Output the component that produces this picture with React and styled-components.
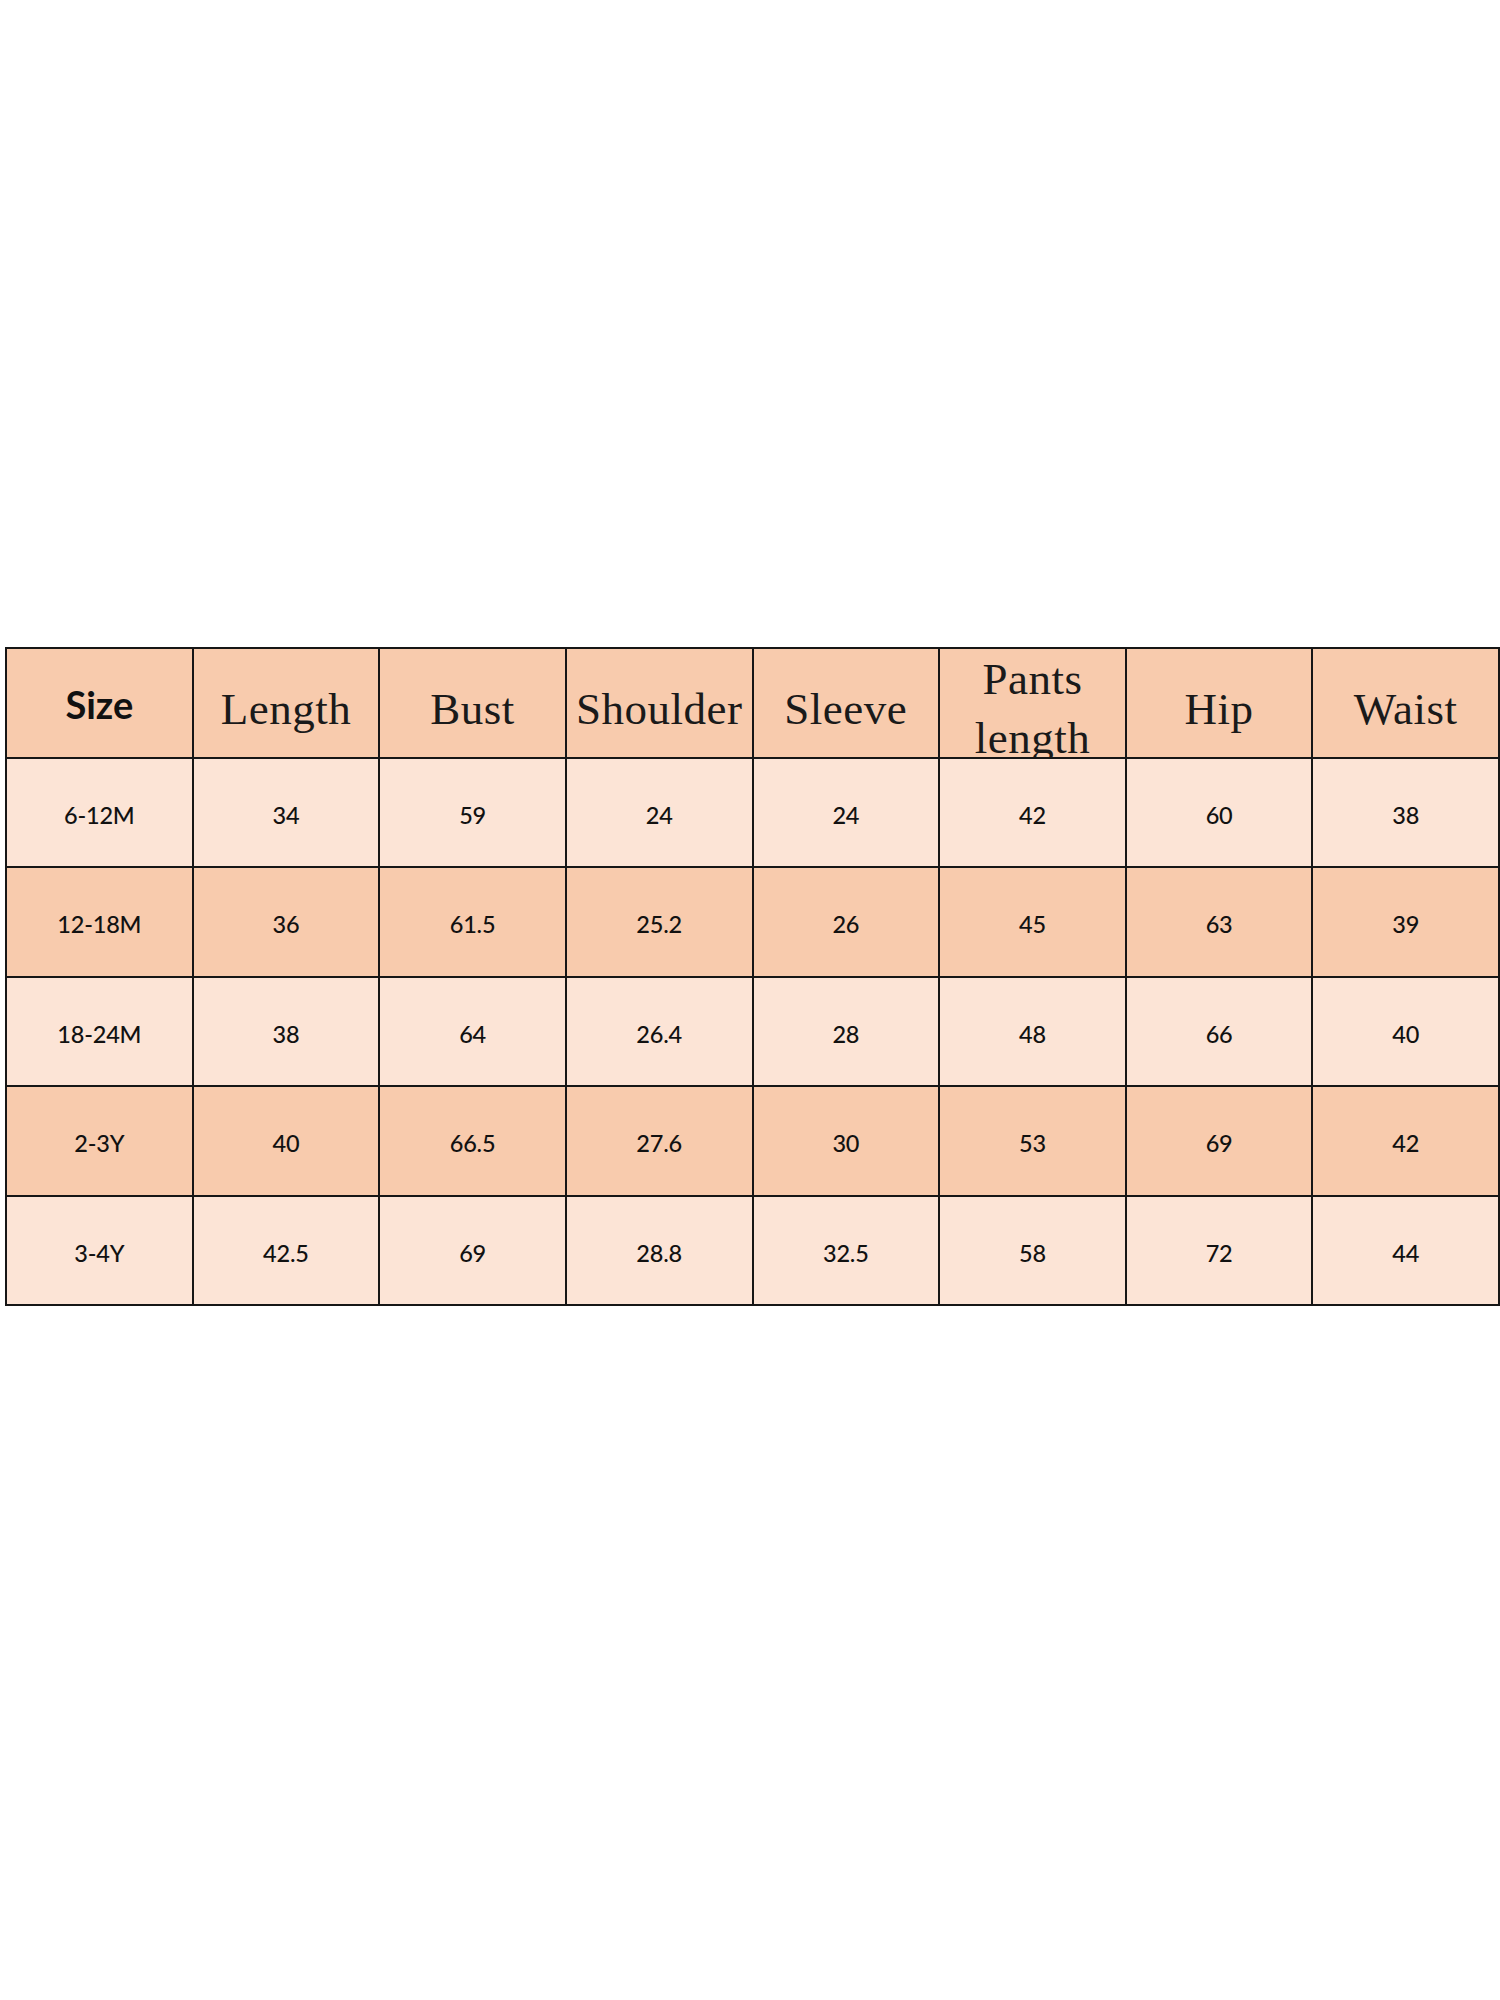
import React from "react";
import styled, { createGlobalStyle } from "styled-components";

const Global = createGlobalStyle`
  html, body { margin: 0; padding: 0; background: #ffffff; }
  body { font-family: "Lato", "Liberation Sans", sans-serif; }
`;

const Page = styled.div`
  width: 1500px;
  height: 2000px;
  box-sizing: border-box;
  padding: 647px 0 0 5px;
  background: #ffffff;
`;

const Grid = styled.div`
  display: grid;
  grid-template-columns: repeat(8, 1fr);
  grid-template-rows: repeat(6, 107.5px);
  gap: 2px;
  padding: 2px;
  width: 1495px;
  box-sizing: border-box;
  background: #161616;
`;

const Cell = styled.div`
  display: flex;
  align-items: center;
  justify-content: center;
  overflow: hidden;
  background: ${(p) => (p.$dark ? "#f8cbad" : "#fce4d6")};
  padding-top: ${(p) => (p.$head ? "13px" : "5px")};
  box-sizing: border-box;
  color: #111;
`;

const SansHead = styled.span`
  font-family: "Lato", "Liberation Sans", sans-serif;
  font-weight: 700;
  font-size: 38px;
  line-height: 1;
  margin-top: -11px;
  color: #111;
`;

const SerifHead = styled.span`
  font-family: "Liberation Serif", "DejaVu Serif", serif;
  font-size: 45px;
  line-height: 59px;
  text-align: center;
  color: #1a1a1a;
  white-space: pre;
  letter-spacing: 0.5px;
`;

const Value = styled.span`
  font-family: "Lato", "Liberation Sans", sans-serif;
  font-size: 23.5px;
  font-weight: 500;
  color: #111;
  letter-spacing: -0.2px;
`;

const headers = ["Length", "Bust", "Shoulder", "Sleeve", "Pants\nlength", "Hip", "Waist"];

const rows = [
  ["6-12M", "34", "59", "24", "24", "42", "60", "38"],
  ["12-18M", "36", "61.5", "25.2", "26", "45", "63", "39"],
  ["18-24M", "38", "64", "26.4", "28", "48", "66", "40"],
  ["2-3Y", "40", "66.5", "27.6", "30", "53", "69", "42"],
  ["3-4Y", "42.5", "69", "28.8", "32.5", "58", "72", "44"],
];

export default function App() {
  return (
    <>
      <Global />
      <Page>
        <Grid>
          <Cell $dark $head>
            <SansHead>Size</SansHead>
          </Cell>
          {headers.map((h) => (
            <Cell key={h} $dark $head>
              <SerifHead>{h}</SerifHead>
            </Cell>
          ))}
          {rows.map((r, i) =>
            r.map((v, j) => (
              <Cell key={`${i}-${j}`} $dark={i % 2 === 1}>
                <Value>{v}</Value>
              </Cell>
            ))
          )}
        </Grid>
      </Page>
    </>
  );
}
